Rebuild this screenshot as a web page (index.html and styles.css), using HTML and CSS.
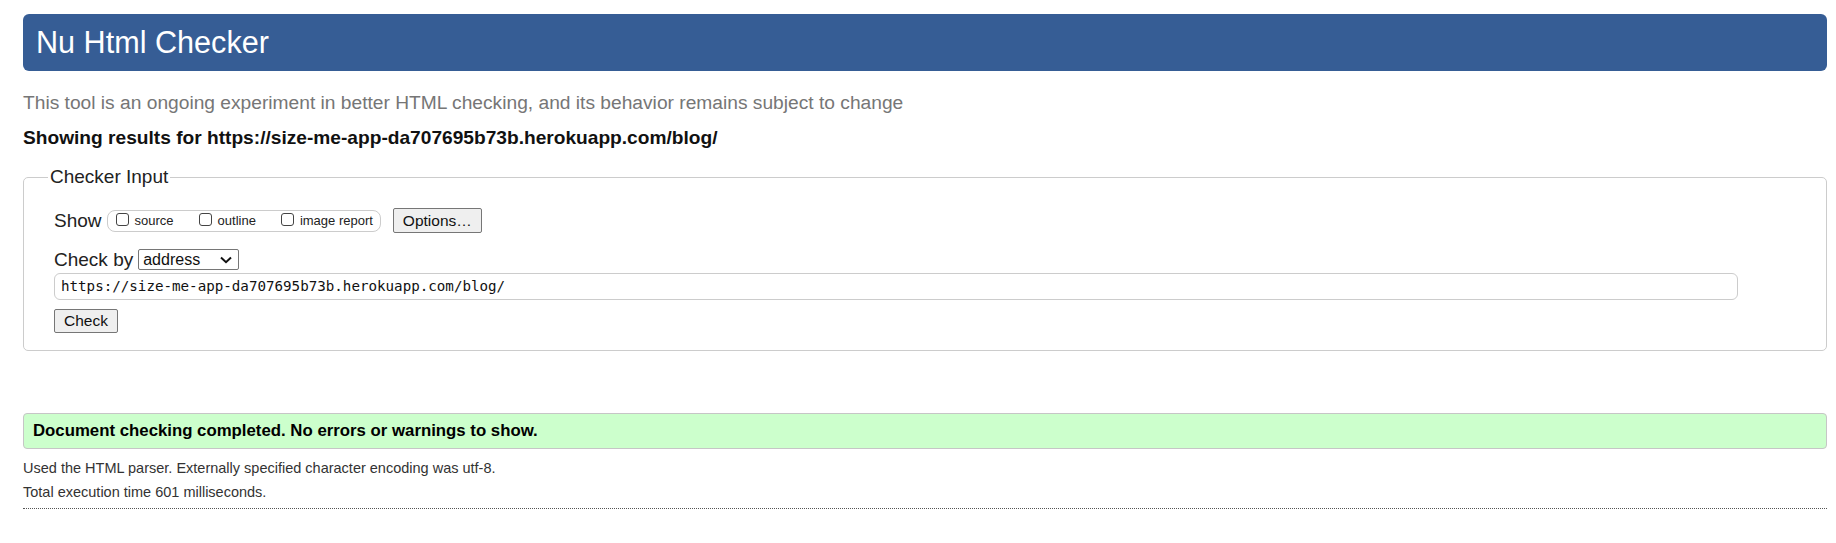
FILE: index.html
```html
<!DOCTYPE html>
<html lang="en">
<head>
<meta charset="utf-8">
<title>Nu Html Checker</title>
<link rel="stylesheet" href="styles.css">
</head>
<body>
<h1 class="title">Nu Html Checker</h1>
<p class="intro">This tool is an ongoing experiment in better HTML checking, and its behavior remains subject to change</p>
<p class="showing">Showing results for https://size-me-app-da707695b73b.herokuapp.com/blog/</p>
<form class="form">
  <fieldset class="fs">
    <legend class="legend">Checker Input</legend>
    <div class="row show-row">
      <span class="lbl">Show</span>
      <span class="cbgroup">
        <label class="cb"><span class="box"></span><span>source</span></label>
        <label class="cb"><span class="box"></span><span>outline</span></label>
        <label class="cb"><span class="box"></span><span>image report</span></label>
      </span>
      <button type="button" class="btn options">Options…</button>
    </div>
    <div class="row by-row">
      <span class="lbl">Check by</span>
      <span class="select"><span>address</span><svg class="chev" width="12" height="8" viewBox="0 0 12 8"><path d="M1 1.5 L6 6.2 L11 1.5" fill="none" stroke="#111" stroke-width="2"/></svg></span>
    </div>
    <div class="url">https://size-me-app-da707695b73b.herokuapp.com/blog/</div>
    <button type="button" class="btn check">Check</button>
  </fieldset>
</form>
<p class="success">Document checking completed. No errors or warnings to show.</p>
<p class="info">Used the HTML parser. Externally specified character encoding was utf-8.</p>
<p class="info total">Total execution time 601 milliseconds.</p>
<hr class="rule">
</body>
</html>
```
FILE: styles.css
```css
html, body { background: #fff; }
body {
  margin: 0;
  padding: 14px 9px 0 23px;
  font-family: "Liberation Sans", Arial, sans-serif;
  color: #222;
}
.title {
  margin: 0;
  height: 57px;
  box-sizing: border-box;
  padding: 0 13px;
  background: #365d95;
  color: #fff;
  font-size: 30.6px;
  font-weight: normal;
  line-height: 57px;
  border-radius: 6px;
}
.intro {
  margin: 21px 0 0 0;
  font-size: 19.2px;
  line-height: 22px;
  color: #767676;
}
.showing {
  margin: 13px 0 0 0;
  font-size: 19.15px;
  line-height: 22px;
  font-weight: bold;
  color: #111;
}
.form { margin: 17px 0 0 0; }
.fs {
  margin: 0;
  padding: 20px 25px 17px 30px;
  border: 1px solid #ccc;
  border-radius: 5px;
  min-width: 0;
}
.legend {
  margin-left: -6px;
  padding: 0 2px;
  font-size: 19px;
  color: #222;
  line-height: 22px;
}
.row { display: flex; align-items: center; }
.lbl { font-size: 19px; color: #222; }
.show-row { height: 25px; }
.cbgroup {
  display: flex;
  align-items: center;
  gap: 25px;
  margin-left: 5px;
  height: 22px;
  box-sizing: border-box;
  padding: 0 7px 0 8px;
  border: 1px solid #ccc;
  border-radius: 8px;
}
.cb { display: flex; align-items: center; font-size: 13px; color: #222; }
.box {
  box-sizing: border-box;
  width: 13px;
  height: 13px;
  margin: 0 6px 2px 0;
  border: 1px solid #444;
  border-radius: 3px;
  background: #fff;
}
.btn {
  font-family: "Liberation Sans", Arial, sans-serif;
  font-size: 15.5px;
  color: #111;
  background: #efefef;
  border: 1px solid #767676;
  border-radius: 2px;
  padding: 0 9px;
  height: 25px;
}
.options { margin-left: 12px; }
.by-row { margin-top: 16px; height: 21px; }
.select {
  display: flex;
  align-items: center;
  justify-content: space-between;
  box-sizing: border-box;
  width: 101px;
  height: 21px;
  margin-left: 5px;
  padding: 0 6px 0 4px;
  border: 1px solid #767676;
  border-radius: 2px;
  font-size: 16px;
  color: #111;
}
.chev { display: block; margin-top: 1px; }
.url {
  box-sizing: border-box;
  margin-top: 3px;
  width: 1684px;
  height: 27px;
  padding: 0 6px;
  border: 1px solid #ccc;
  border-radius: 6px;
  font-family: "DejaVu Sans Mono", "Liberation Mono", monospace;
  font-size: 14.2px;
  line-height: 25px;
  color: #111;
}
.check { margin: 9px 0 0 0; height: 24px; }
.success {
  margin: 62px 0 0 0;
  height: 36px;
  box-sizing: border-box;
  padding: 0 9px;
  background: #ccffcc;
  border: 1px solid #c6c6c6;
  border-radius: 4px;
  font-size: 16.8px;
  font-weight: bold;
  line-height: 34px;
  color: #000;
}
.info {
  margin: 11px 0 0 0;
  font-size: 14.5px;
  line-height: 17px;
  color: #333;
}
.total { margin-top: 7px; }
.rule {
  margin: 7px 0 0 0;
  border: 0;
  border-top: 1px dotted #555;
  height: 0;
}
```
